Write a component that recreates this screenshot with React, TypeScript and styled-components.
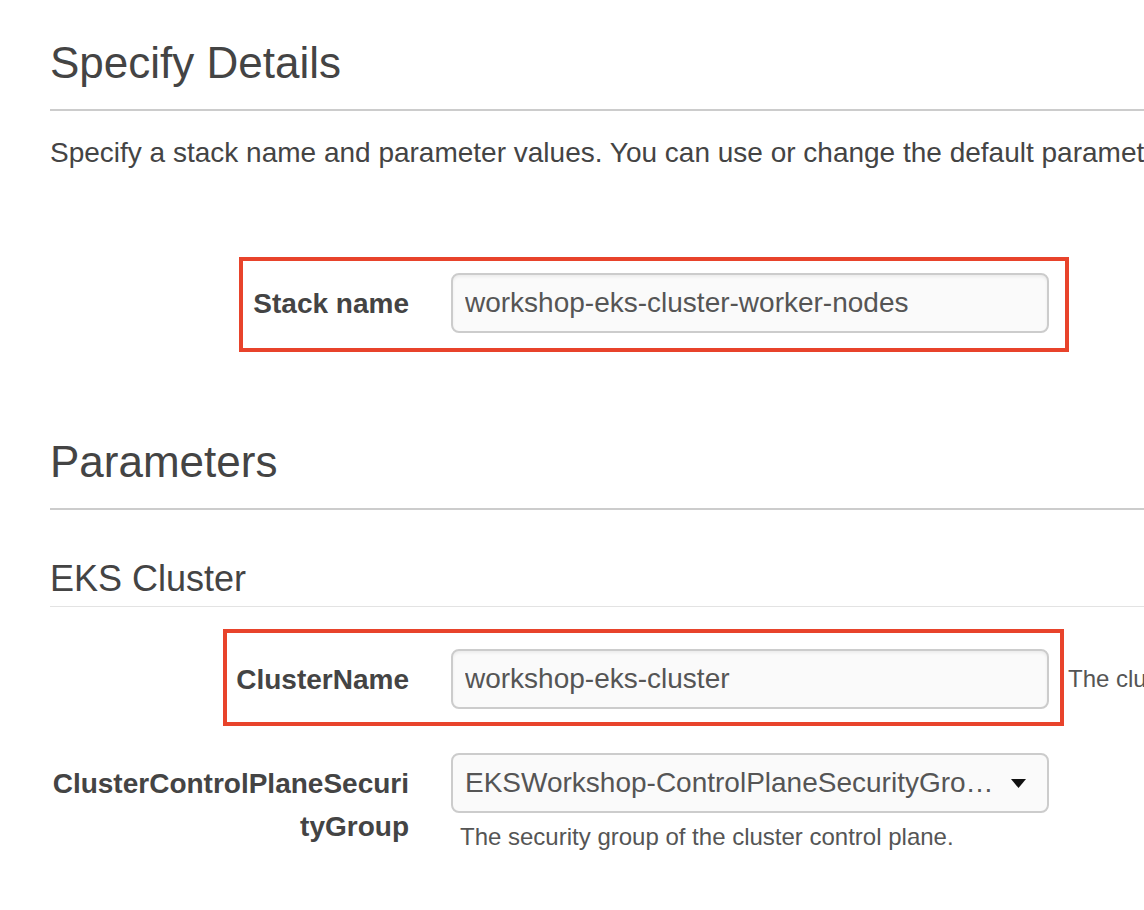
import React from 'react';
import styled, { createGlobalStyle } from 'styled-components';

const GlobalStyle = createGlobalStyle`
html, body {
    margin: 0;
    padding: 0;
    overflow: hidden;
    background: #fff;
}
body {
    font-family: "Liberation Sans", Arial, Helvetica, sans-serif;
    color: #444;
}
`;

const Page = styled.div`
width: 1900px;
padding-left: 50px;
padding-top: 39px;
`;

const SectionHeader = styled.div<{ $light?: boolean; $top?: number }>`
margin-top: ${p => p.$top || 0}px;
border-bottom: ${p => p.$light ? '1px solid #e3e3e3' : '2px solid #cccccc'};
padding-bottom: ${p => p.$light ? '7px' : '22px'};
`;

const Title = styled.h1`
margin: 0;
font-size: 44px;
line-height: 48px;
font-weight: normal;
color: #444;
`;

const SubTitle = styled.h2`
margin: 0;
font-size: 36px;
line-height: 40px;
font-weight: normal;
color: #444;
`;

const Intro = styled.p`
margin: 26px 0 0;
font-size: 28px;
line-height: 32px;
white-space: nowrap;
color: #444;
`;

const Form = styled.div<{ $top: number }>`
margin-top: ${p => p.$top}px;
display: flex;
flex-direction: column;
gap: 44px;
`;

const Row = styled.div`
position: relative;
display: flex;
align-items: flex-start;
`;

const Label = styled.label`
flex: 0 0 359px;
margin-right: 42px;
padding-top: 9px;
font-size: 28px;
line-height: 43px;
font-weight: bold;
text-align: right;
word-break: break-all;
color: #444;
`;

const Field = styled.div`
flex: 0 0 598px;
display: flex;
flex-direction: column;
`;

const TextInput = styled.input`
box-sizing: border-box;
width: 598px;
height: 60px;
margin: 0;
padding: 0 12px;
border: 2px solid #cccccc;
border-radius: 8px;
background: #fafafa;
box-shadow: inset 0 2px 3px rgba(0, 0, 0, 0.06);
font-family: "Liberation Sans", Arial, Helvetica, sans-serif;
font-size: 28px;
color: #555;
outline: none;
`;

const SelectBox = styled.div`
box-sizing: border-box;
width: 598px;
height: 60px;
display: flex;
align-items: center;
padding: 0 21px 0 12px;
border: 2px solid #cccccc;
border-radius: 8px;
background: #fafafa;
font-size: 28px;
color: #555;
`;

const SelectValue = styled.span`
flex: 1;
min-width: 0;
white-space: nowrap;
overflow: hidden;
text-overflow: ellipsis;
margin-right: 8px;
`;

const Hint = styled.div<{ $side?: boolean }>`
font-size: 24px;
line-height: 28px;
color: #555;
white-space: nowrap;
margin: ${p => p.$side ? '16px 0 0 19px' : '10px 0 0 9px'};
`;

// red annotation frame drawn over a row
const Highlight = styled.span<{ $left: number; $top: number; $width: number; $height: number }>`
position: absolute;
box-sizing: border-box;
left: ${p => p.$left}px;
top: ${p => p.$top}px;
width: ${p => p.$width}px;
height: ${p => p.$height}px;
border: 4px solid #e8432b;
pointer-events: none;
`;

const Caret = () => (
    <svg width="15" height="9" viewBox="0 0 15 9">
        <polygon points="0,0 15,0 7.5,9" fill="#111" />
    </svg>
);

const App: React.FunctionComponent = () => {
    return (
        <Page>
            <GlobalStyle />
            <SectionHeader>
                <Title>Specify Details</Title>
            </SectionHeader>
            <Intro>
                Specify a stack name and parameter values. You can use or change the default parameter values,
                which are defined in the AWS CloudFormation template. Learn more.
            </Intro>

            <Form $top={104}>
                <Row>
                    <Label>Stack name</Label>
                    <Field>
                        <TextInput readOnly value="workshop-eks-cluster-worker-nodes" />
                    </Field>
                    <Highlight $left={189} $top={-16} $width={830} $height={95} />
                </Row>
            </Form>

            <SectionHeader $top={105}>
                <Title>Parameters</Title>
            </SectionHeader>

            <SectionHeader $light $top={49}>
                <SubTitle>EKS Cluster</SubTitle>
            </SectionHeader>

            <Form $top={42}>
                <Row>
                    <Label>ClusterName</Label>
                    <Field>
                        <TextInput readOnly value="workshop-eks-cluster" />
                    </Field>
                    <Hint $side>The cluster name of your existing EKS Cluster.</Hint>
                    <Highlight $left={173} $top={-20} $width={841} $height={97} />
                </Row>
                <Row>
                    <Label>ClusterControlPlaneSecurityGroup</Label>
                    <Field>
                        <SelectBox>
                            <SelectValue>EKSWorkshop-ControlPlaneSecurityGroup-1BX7PQ2K9ZJ4M (sg-0f2a6c1d)</SelectValue>
                            <Caret />
                        </SelectBox>
                        <Hint>The security group of the cluster control plane.</Hint>
                    </Field>
                </Row>
            </Form>
        </Page>
    );
};

export default App;
